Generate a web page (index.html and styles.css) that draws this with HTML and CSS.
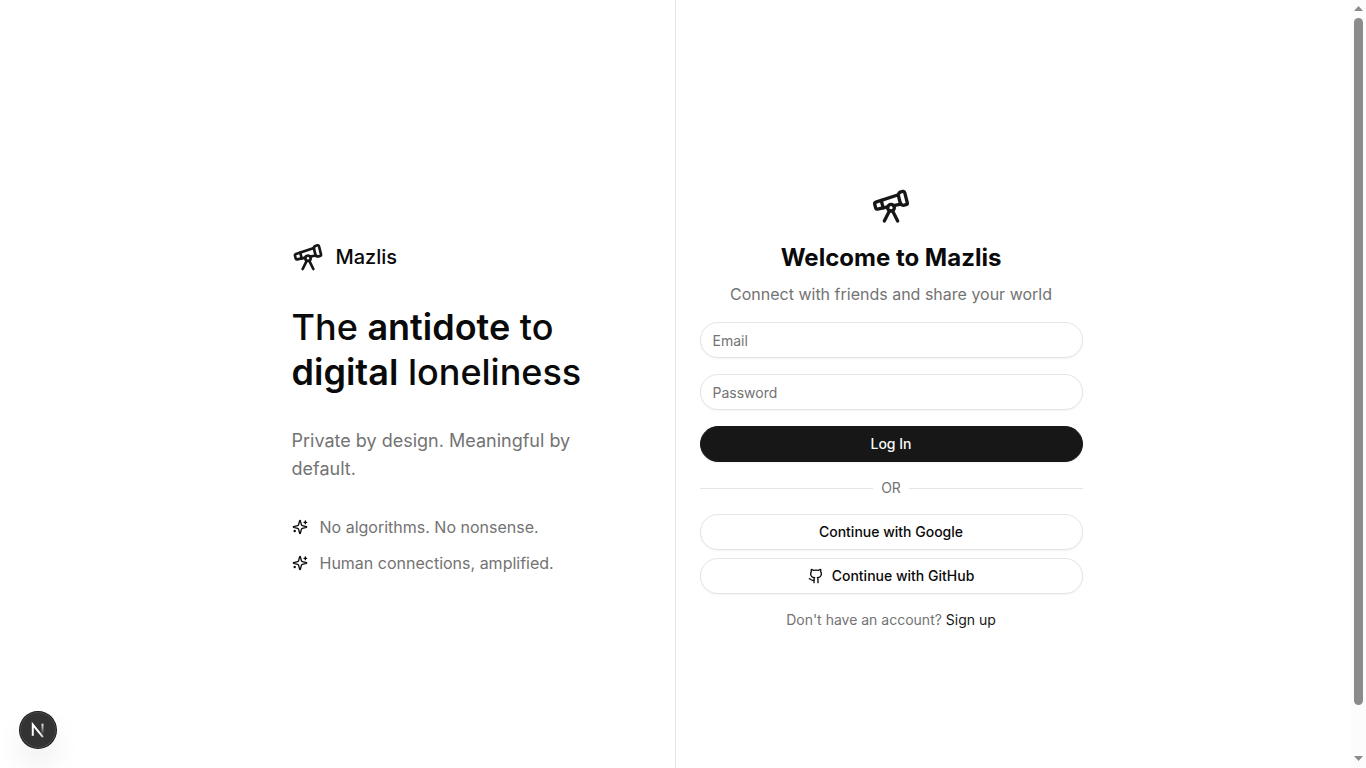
FILE: index.html
```html
<!DOCTYPE html>
<html lang="en">
<head>
<meta charset="utf-8">
<meta name="viewport" content="width=device-width, initial-scale=1">
<title>Mazlis</title>
<link rel="stylesheet" href="styles.css">
</head>
<body>
<svg class="sprite" aria-hidden="true">
  <symbol id="telescope" viewBox="0 0 24 24">
    <path d="m10.065 12.493-6.18 1.318a.934.934 0 0 1-1.108-.702l-.537-2.15a1.07 1.07 0 0 1 .691-1.265l13.504-4.44"/>
    <path d="m13.56 11.747 4.332-.924"/>
    <path d="m16 21-3.105-6.21"/>
    <path d="M16.485 5.94a2 2 0 0 1 1.455-2.425l1.09-.272a1 1 0 0 1 1.212.727l1.515 6.06a1 1 0 0 1-.727 1.213l-1.09.272a2 2 0 0 1-2.425-1.455z"/>
    <path d="m6.158 8.633 1.114 4.456"/>
    <path d="m8 21 3.105-6.21"/>
    <circle cx="12" cy="13" r="2"/>
  </symbol>
  <symbol id="sparkles" viewBox="0 0 24 24">
    <path d="M9.937 15.5A2 2 0 0 0 8.5 14.063l-6.135-1.582a.5.5 0 0 1 0-.962L8.5 9.936A2 2 0 0 0 9.937 8.5l1.582-6.135a.5.5 0 0 1 .963 0L14.063 8.5A2 2 0 0 0 15.5 9.937l6.135 1.581a.5.5 0 0 1 0 .964L15.5 14.063a2 2 0 0 0-1.437 1.437l-1.582 6.135a.5.5 0 0 1-.963 0z"/>
    <path d="M20 3v4"/><path d="M22 5h-4"/><path d="M4 17v2"/><path d="M5 18H3"/>
  </symbol>
</svg>
<div class="viewport">
  <main class="page">
    <section class="intro">
      <div class="intro-content">
        <div class="brand">
          <svg class="icon icon-md" aria-hidden="true"><use href="#telescope"/></svg>
          <span>Mazlis</span>
        </div>
        <h1 class="headline">The <strong>antidote</strong> to <strong>digital</strong> loneliness</h1>
        <p class="tagline">Private by design. Meaningful by default.</p>
        <ul class="points">
          <li><svg class="icon icon-sm" aria-hidden="true"><use href="#sparkles"/></svg>No algorithms. No nonsense.</li>
          <li><svg class="icon icon-sm" aria-hidden="true"><use href="#sparkles"/></svg>Human connections, amplified.</li>
        </ul>
      </div>
    </section>
    <section class="login">
      <div class="login-content">
        <header class="welcome">
          <svg class="icon icon-lg" aria-hidden="true"><use href="#telescope"/></svg>
          <h2>Welcome to Mazlis</h2>
          <p>Connect with friends and share your world</p>
        </header>
        <form class="form">
          <input class="field" type="email" placeholder="Email" aria-label="Email">
          <input class="field" type="password" placeholder="Password" aria-label="Password">
          <button class="button primary" type="submit">Log In</button>
        </form>
        <div class="divider"><span>OR</span></div>
        <div class="providers">
          <button class="button" type="button">Continue with Google</button>
          <button class="button" type="button">
            <svg class="icon icon-sm" viewBox="0 0 24 24" aria-hidden="true"><path d="M15 22v-4a4.8 4.8 0 0 0-1-3.5c3 0 6-2 6-5.5.08-1.25-.27-2.48-1-3.5.28-1.15.28-2.35 0-3.5 0 0-1 0-3 1.5-2.64-.5-5.36-.5-8 0C6 2 5 2 5 2c-.3 1.15-.3 2.35 0 3.5A5.403 5.403 0 0 0 4 9c0 3.5 3 5.5 6 5.5-.39.49-.68 1.05-.85 1.65-.17.6-.22 1.23-.15 1.85v4"/><path d="M9 18c-4.51 2-5-2-7-2"/></svg>
            Continue with GitHub
          </button>
        </div>
        <p class="signup">Don't have an account? <a href="#signup">Sign up</a></p>
      </div>
    </section>
  </main>
  <div class="scrollbar" aria-hidden="true">
    <svg class="arrow" viewBox="0 0 9 5"><path d="M0 5 4.500 0 9 5z"/></svg>
    <div class="track"><div class="thumb"></div></div>
    <svg class="arrow" viewBox="0 0 9 5"><path d="M0 0 4.500 5 9 0z"/></svg>
  </div>
</div>
<button class="dev-badge" type="button" aria-label="Open developer tools">
  <svg viewBox="0 0 40 40" fill="none" aria-hidden="true">
    <defs>
      <linearGradient id="diagonal" gradientUnits="userSpaceOnUse" x1="22" y1="22" x2="28" y2="30"><stop stop-color="#fff"/><stop offset=".6" stop-color="#fff" stop-opacity=".75"/><stop offset="1" stop-color="#fff" stop-opacity="0"/></linearGradient>
      <linearGradient id="stem" gradientUnits="userSpaceOnUse" x1="26" y1="12" x2="26" y2="25"><stop stop-color="#fff"/><stop offset="1" stop-color="#fff" stop-opacity="0"/></linearGradient>
    </defs>
    <path d="M14.200 26.500V14L25.500 28" stroke="url(#diagonal)" stroke-width="2.200"/>
    <path d="M25 13V25" stroke="url(#stem)" stroke-width="2.200"/>
  </svg>
</button>
</body>
</html>
```
FILE: styles.css
```css
* { box-sizing: border-box; }
body {
  margin: 0;
  background: #fff;
  color: #0a0a0a;
  font: 16px/24px Inter, "Liberation Sans", sans-serif;
}
h1, h2, p, ul { margin: 0; padding: 0; }
.sprite { position: absolute; width: 0; height: 0; }
.icon {
  flex: none;
  fill: none;
  stroke: currentColor;
  stroke-width: 2;
  stroke-linecap: round;
  stroke-linejoin: round;
}
.icon-sm { width: 16px; height: 16px; }
.icon-md { width: 32px; height: 32px; color: #171717; }
.icon-lg { width: 40px; height: 40px; color: #171717; }

.viewport { display: flex; height: 100vh; }
.page {
  flex: 1;
  display: grid;
  grid-template-columns: 1fr 1fr;
  grid-auto-rows: minmax(calc(100vh + 48px), auto);
  overflow-y: auto;
  scrollbar-width: none;
}
.intro, .login { display: flex; align-items: center; }
.intro { justify-content: flex-end; border-right: 1px solid #e5e5e5; }
.intro-content {
  display: flex;
  flex-direction: column;
  gap: 32px;
  width: 100%;
  max-width: 383px;
  padding-right: 64px;
}
.brand {
  display: flex;
  align-items: center;
  gap: 12px;
  font-size: 20px;
  line-height: 28px;
  font-weight: 500;
}
.headline { font-size: 36px; line-height: 45px; font-weight: 500; }
.headline strong { font-weight: 600; }
.tagline { color: #737373; font-size: 18px; line-height: 28px; }
.points {
  display: flex;
  flex-direction: column;
  gap: 12px;
  list-style: none;
  color: #737373;
}
.points li { display: flex; align-items: center; gap: 12px; }
.points .icon { color: #0a0a0a; }

.login { padding: 0 24px; }
.login-content {
  display: flex;
  flex-direction: column;
  gap: 16px;
  width: 100%;
  max-width: 383px;
}
.welcome { display: flex; flex-direction: column; align-items: center; text-align: center; }
.welcome h2 { margin: 16px 0 8px; font-size: 24px; line-height: 32px; font-weight: 700; }
.welcome p { color: #737373; }
.form { display: flex; flex-direction: column; gap: 16px; }
.field, .button {
  width: 100%;
  height: 36px;
  border: 1px solid #e5e5e5;
  border-radius: 18px;
  background: #fff;
  color: #0a0a0a;
  font: 14px/20px Inter, "Liberation Sans", sans-serif;
  box-shadow: 0 1px 2px rgba(0, 0, 0, .05);
}
.field { padding: 4px 12px; }
.field::placeholder { color: #737373; opacity: 1; }
.button {
  display: flex;
  align-items: center;
  justify-content: center;
  gap: 8px;
  padding: 0 16px;
  font-weight: 500;
  cursor: pointer;
}
.primary { border-color: #171717; background: #171717; color: #fafafa; }
.divider {
  display: flex;
  align-items: center;
  gap: 8px;
  color: #737373;
  font-size: 14px;
  line-height: 20px;
}
.divider::before, .divider::after { content: ""; flex: 1; height: 1px; background: #e5e5e5; }
.providers { display: flex; flex-direction: column; gap: 8px; }
.signup { color: #737373; font-size: 14px; line-height: 20px; text-align: center; }
.signup a { color: #171717; text-decoration: none; }

.scrollbar {
  flex: none;
  display: flex;
  flex-direction: column;
  align-items: center;
  gap: 7px;
  width: 15px;
  padding: 6px 0 7px;
  background: #fcfcfc;
}
.arrow { width: 9px; height: 5px; fill: #8b8b8b; }
.track { flex: 1; width: 9px; }
.thumb { height: 94%; border-radius: 5px; background: #8b8b8b; }

.dev-badge {
  position: fixed;
  left: 20px;
  bottom: 20px;
  width: 36px;
  height: 36px;
  padding: 0;
  border: 0;
  border-radius: 50%;
  background: #333;
  box-shadow: 0 0 0 1px #171717, inset 0 0 0 1px #474747, 0 16px 32px -8px rgba(0, 0, 0, .24);
}
.dev-badge svg { display: block; width: 36px; height: 36px; }
```
